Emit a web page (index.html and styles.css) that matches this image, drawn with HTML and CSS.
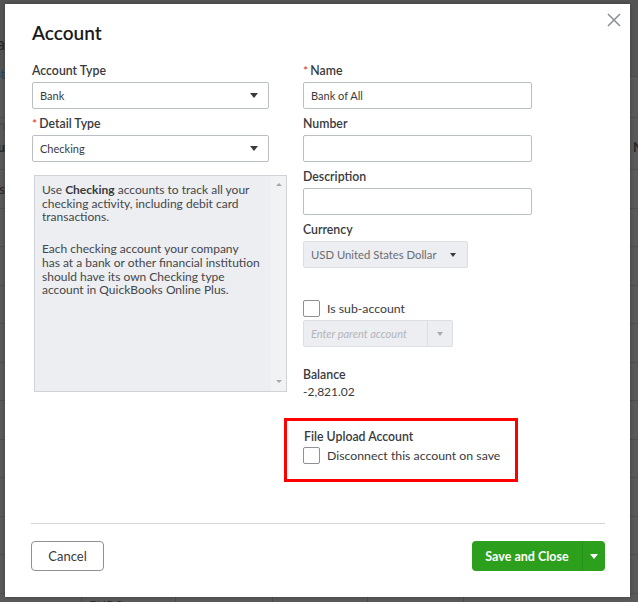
FILE: index.html
```html
<!DOCTYPE html>
<html lang="en">

<head>
    <meta charset="UTF-8">
    <meta name="viewport" content="width=device-width, initial-scale=1.0">
    <title>Account</title>

    <link rel="stylesheet" href="styles.css">
</head>

<body>
    <!-- chart of accounts, dimmed behind the dialog -->
    <div class="page">
        <div class="page__head">
            <div class="edge edge--title">Chart of Accounta</div>
            <div class="edge edge--link">Run report list</div>
        </div>
        <div class="page__bar">
            <div class="edge edge--muted">Filter by nah</div>
        </div>
        <div class="ledger ledger--head">
            <div class="edge edge--bold">NAMEu</div>
            <span></span><span></span><span></span><span></span><span></span><span></span>
            <span class="ledger__cap">NCE</span>
        </div>
        <div class="ledger"><div class="edge">Petty cas</div></div>
        <div class="ledger"></div>
        <div class="ledger"></div>
        <div class="ledger"></div>
        <div class="ledger"></div>
        <div class="ledger"></div>
        <div class="ledger"></div>
        <div class="ledger"></div>
        <div class="ledger"></div>
        <div class="ledger"></div>
        <div class="ledger"></div>
        <div class="ledger">
            <span></span>
            <span class="ledger__cell">EURO ACCOUNT</span>
            <span class="ledger__cell">Bank</span>
            <span class="ledger__cell">Cash on hand</span>
            <span class="ledger__cell">EUR</span>
            <span class="ledger__cell ledger__cell--num">2,000.00</span>
            <span></span><span></span>
        </div>
    </div>

    <div class="modal">
        <button class="modal__close" aria-label="Close">
            <svg width="14" height="14" viewBox="0 0 14 14">
                <path d="M1 1L13 13M13 1L1 13" stroke="#8d9096" stroke-width="1.6" fill="none" />
            </svg>
        </button>

        <h1 class="modal__title">Account</h1>

        <div class="modal__body">
            <div class="col">
                <div class="field">
                    <label class="field__label">Account Type</label>
                    <div class="select">
                        <span>Bank</span>
                        <i class="caret"></i>
                    </div>
                </div>
                <div class="field">
                    <label class="field__label"><b class="req">*</b>Detail Type</label>
                    <div class="select">
                        <span>Checking</span>
                        <i class="caret"></i>
                    </div>
                </div>

                <div class="hint">
                    <div class="hint__text">
                        <p>Use <b>Checking</b> accounts to track all your<br>checking activity, including debit card<br>transactions.</p>
                        <p>Each checking account your company<br>has at a bank or other financial institution<br>should have its own Checking type<br>account in QuickBooks Online Plus.</p>
                    </div>
                    <div class="hint__scroll">
                        <i class="arrow arrow--up"></i>
                        <i class="arrow"></i>
                    </div>
                </div>
            </div>

            <div class="col">
                <div class="field">
                    <label class="field__label"><b class="req">*</b>Name</label>
                    <input class="input" type="text" value="Bank of All">
                </div>
                <div class="field">
                    <label class="field__label">Number</label>
                    <input class="input" type="text">
                </div>
                <div class="field">
                    <label class="field__label">Description</label>
                    <input class="input" type="text">
                </div>
                <div class="field">
                    <label class="field__label">Currency</label>
                    <div class="select select--disabled select--currency">
                        <span>USD United States Dollar</span>
                        <i class="caret caret--small"></i>
                    </div>
                </div>

                <label class="check check--sub">
                    <span class="check__box"></span>
                    Is sub-account
                </label>
                <div class="combo">
                    <span class="combo__input">Enter parent account</span>
                    <span class="combo__btn"><i class="caret caret--faint"></i></span>
                </div>

                <div class="balance">
                    <div class="field__label">Balance</div>
                    <div class="balance__value">-2,821.02</div>
                </div>

                <div class="upload">
                    <div class="field__label">File Upload Account</div>
                    <label class="check">
                        <span class="check__box"></span>
                        Disconnect this account on save
                    </label>
                </div>
            </div>
        </div>

        <div class="modal__foot">
            <button class="btn">Cancel</button>
            <div class="split">
                <button class="split__main">Save and Close</button>
                <button class="split__menu"><i class="caret caret--white"></i></button>
            </div>
        </div>
    </div>
</body>

</html>
```

FILE: styles.css
```css
* {
    box-sizing: border-box;
}

html,
body {
    margin: 0;
}

body {
    position: relative;
    width: 638px;
    height: 602px;
    overflow: hidden;
    background-color: #5a5a5a;
    font-family: "Lato", "Open Sans", sans-serif;
    color: #393a3d;
}

/* page behind the overlay */
.page {
    font-size: 13px;
    color: #262626;
}

.page__head {
    height: 77px;
    padding-top: 33px;
    background-color: #545454;
    border-bottom: 1px solid #4c4c4c;
}

.page__bar {
    height: 35px;
    padding-top: 40px;
    border-bottom: 1px solid #4f4f4f;
}

.edge {
    display: flex;
    justify-content: flex-end;
    width: 5px;
    white-space: nowrap;
}

.edge--title {
    font-size: 17px;
}

.edge--link {
    margin-top: 12px;
    color: #1b4a73;
}

.edge--muted {
    color: #4a4a4a;
}

.edge--bold {
    font-weight: 700;
}

.ledger {
    display: grid;
    grid-template-columns: 81px 94px 97px 95px 96px 96px 66px 1fr;
    align-items: center;
    height: 38.5px;
    border-bottom: 1px solid #4f4f4f;
}

.ledger--head {
    height: 52px;
    padding-top: 6px;
}

.ledger__cap {
    padding-left: 8px;
    font-weight: 700;
}

.ledger__cell {
    height: 100%;
    display: flex;
    align-items: center;
    padding: 4px 7px 0;
    border-left: 1px solid #4d4d4d;
    color: #2a2a2a;
}

.ledger__cell--num {
    justify-content: flex-end;
}

/* dialog */
.modal {
    position: absolute;
    left: 5px;
    top: 4px;
    width: 625px;
    height: 593px;
    display: flex;
    flex-direction: column;
    padding: 18px 25px 0 26px;
    background-color: #fff;
    box-shadow: 0 0 4px rgba(0, 0, 0, .3);
}

.modal__close {
    position: absolute;
    top: 9px;
    right: 9px;
    width: 14px;
    height: 14px;
    padding: 0;
    border: 0;
    background: none;
}

.modal__close svg {
    display: block;
}

.modal__title {
    margin: 0 0 0 1px;
    font-size: 19px;
    line-height: 22px;
    font-weight: 600;
    color: #1a1a1a;
}

.modal__body {
    display: grid;
    grid-template-columns: 237px 229px;
    column-gap: 34px;
    margin-top: 19px;
    padding-left: 1px;
}

.col {
    display: flex;
    flex-direction: column;
}

.field {
    display: flex;
    flex-direction: column;
    margin-bottom: 7px;
}

.field__label {
    margin-bottom: 3px;
    font-size: 12.3px;
    line-height: 16px;
    font-weight: 600;
    color: #393a3d;
}

.req {
    margin-right: 2px;
    color: #e0301e;
    font-weight: 400;
}

.select,
.input {
    height: 27px;
    border: 1px solid #babec5;
    border-radius: 2px;
    background-color: #fff;
    font-family: inherit;
    font-size: 11px;
    color: #393a3d;
}

.select {
    display: flex;
    align-items: center;
    justify-content: space-between;
    padding: 0 10px 0 7px;
}

.input {
    padding: 0 7px;
    outline: none;
}

.select--disabled {
    background-color: #eceef1;
    border-color: #dcdee2;
    color: #6b6c72;
}

.select--currency {
    width: 165px;
    font-size: 11.3px;
    padding-right: 11px;
}

.caret {
    width: 0;
    height: 0;
    border-left: 4px solid transparent;
    border-right: 4px solid transparent;
    border-top: 5px solid #393a3d;
}

.caret--small {
    border-left-width: 3px;
    border-right-width: 3px;
    border-top-width: 4px;
}

.caret--faint {
    border-left-width: 3px;
    border-right-width: 3px;
    border-top-width: 4px;
    border-top-color: #a7aab0;
}

.caret--white {
    border-top-color: #fff;
}

/* detail type description */
.hint {
    display: flex;
    width: 253px;
    height: 217px;
    margin: 6px 0 0 2px;
    border: 1px solid #cfd2d6;
    background-color: #eceef1;
}

.hint__text {
    flex: 1;
    padding: 7px 0 0 7px;
    font-size: 12px;
    line-height: 13.7px;
    color: #45464a;
}

.hint__text p {
    margin: 0 0 18px;
}

.hint__text b {
    font-weight: 700;
    color: #393a3d;
}

.hint__scroll {
    display: flex;
    flex-direction: column;
    justify-content: space-between;
    align-items: center;
    width: 15px;
    padding: 7px 0 8px;
    background-color: #f1f2f3;
}

.arrow {
    width: 0;
    height: 0;
    border-left: 3px solid transparent;
    border-right: 3px solid transparent;
    border-top: 3px solid #a8a8a8;
}

.arrow--up {
    border-top: 0;
    border-bottom: 3px solid #a8a8a8;
}

/* checkboxes */
.check {
    display: flex;
    align-items: center;
    gap: 7px;
    font-size: 12.3px;
    line-height: 17px;
    color: #393a3d;
}

.check__box {
    width: 17px;
    height: 17px;
    border: 1px solid #8d9096;
    border-radius: 2px;
    background-color: #fff;
}

.check--sub {
    margin-top: 25px;
}

.combo {
    display: flex;
    width: 150px;
    height: 27px;
    margin-top: 3px;
    border: 1px solid #dcdee2;
    border-radius: 2px;
    background-color: #eceef1;
}

.combo__input {
    flex: 1;
    display: flex;
    align-items: center;
    padding-left: 7px;
    font-size: 11px;
    font-style: italic;
    color: #b3b5ba;
}

.combo__btn {
    display: flex;
    align-items: center;
    justify-content: center;
    width: 25px;
    border-left: 1px solid #dcdee2;
}

.balance {
    margin-top: 20px;
}

.balance .field__label {
    margin-bottom: 1px;
}

.balance__value {
    font-size: 12px;
    line-height: 16px;
    color: #393a3d;
}

/* red highlight round the upload option */
.upload {
    width: 234px;
    margin: 18px 0 0 -19px;
    padding: 8px 0 15px 16px;
    border: 3px solid #ff0000;
}

.upload .field__label {
    margin: 0 0 2px 1px;
}

/* footer */
.modal__foot {
    display: flex;
    justify-content: space-between;
    margin-top: auto;
    padding: 17px 0 26px;
    border-top: 1px solid #d4d7dc;
}

.btn {
    width: 73px;
    height: 30px;
    padding: 0;
    border: 1px solid #8d9096;
    border-radius: 4px;
    background-color: #fff;
    font-family: inherit;
    font-size: 13px;
    color: #393a3d;
}

.split {
    display: flex;
    height: 30px;
    border-radius: 4px;
    overflow: hidden;
    background-color: #2ca01c;
}

.split button {
    height: 30px;
    padding: 0;
    border: 0;
    background: none;
    font-family: inherit;
    color: #fff;
}

.split__main {
    width: 110px;
    font-size: 12.5px;
    font-weight: 700;
}

.split__menu {
    display: flex;
    align-items: center;
    justify-content: center;
    width: 23px;
    border-left: 1px solid #25901a !important;
}
```
